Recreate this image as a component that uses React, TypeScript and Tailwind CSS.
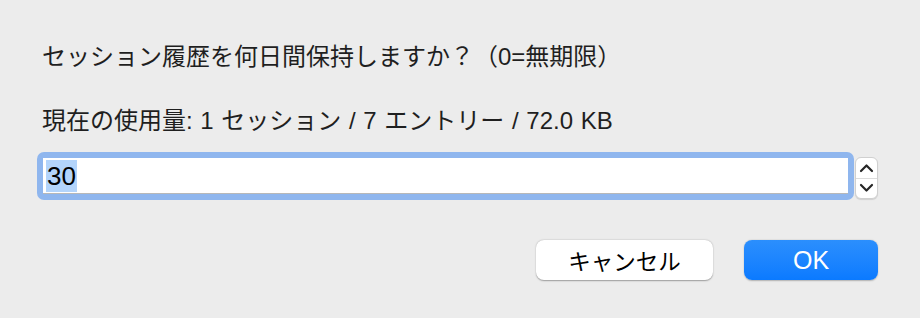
export default function App() {
  return (
    <div
      className="w-[920px] h-[318px] bg-[#ececec] text-[#1f1f1f] flex flex-col pl-[42px] pr-[42px]"
      style={{ fontFamily: '"Liberation Sans", "Noto Sans CJK JP", sans-serif' }}
    >
      {/* Message */}
      <p className="mt-[43px] text-[24px] leading-[28px] whitespace-nowrap">
        セッション履歴を何日間保持しますか？（0=無期限）
      </p>
      <p className="mt-[36px] text-[24px] leading-[28px] whitespace-nowrap [word-spacing:1px]">
        現在の使用量: 1 セッション / 7 エントリー / 72.0 KB
      </p>

      {/* Input with stepper */}
      <div className="mt-[17px] -ml-[5px] flex items-start">
        <div className="w-[818px] h-[48px] rounded-[7px] bg-[#8fb6ee] p-[6px]">
          <div className="h-full bg-white border-b border-[#b8b8b8] flex items-center pl-[3px]">
            <span className="bg-[#b3d4fb] text-black text-[26px] leading-[32px] px-[1px]">
              30
            </span>
          </div>
        </div>
        <div className="ml-[1px] mt-[5px] w-[23px] h-[42px] rounded-[6px] bg-white border border-[#d0d0d0] shadow-[0_1px_1px_rgba(0,0,0,0.12)] flex flex-col">
          <div className="flex-1 flex items-center justify-center border-b border-[#dcdcdc]">
            <svg width="15" height="10" viewBox="0 0 15 10" fill="none">
              <path d="M2 8L7.5 2.5L13 8" stroke="#262626" strokeWidth="2.2" strokeLinecap="round" strokeLinejoin="round" />
            </svg>
          </div>
          <div className="flex-1 flex items-center justify-center">
            <svg width="15" height="10" viewBox="0 0 15 10" fill="none">
              <path d="M2 2L7.5 7.5L13 2" stroke="#262626" strokeWidth="2.2" strokeLinecap="round" strokeLinejoin="round" />
            </svg>
          </div>
        </div>
      </div>

      {/* Buttons */}
      <div className="mt-[40px] flex justify-end gap-[31px]">
        <button
          className="w-[177px] h-[40px] rounded-[8px] bg-white text-black text-[22.5px] leading-none shadow-[0_0.5px_1.5px_rgba(0,0,0,0.35)] flex items-center justify-center"
          style={{ fontFamily: '"Noto Sans CJK JP", sans-serif' }}
        >
          キャンセル
        </button>
        <button className="w-[134px] h-[40px] rounded-[8px] bg-gradient-to-b from-[#2b8ffd] to-[#0a7aff] text-white text-[25px] leading-none shadow-[0_0.5px_1.5px_rgba(0,0,0,0.25)] flex items-center justify-center">
          OK
        </button>
      </div>
    </div>
  );
}
